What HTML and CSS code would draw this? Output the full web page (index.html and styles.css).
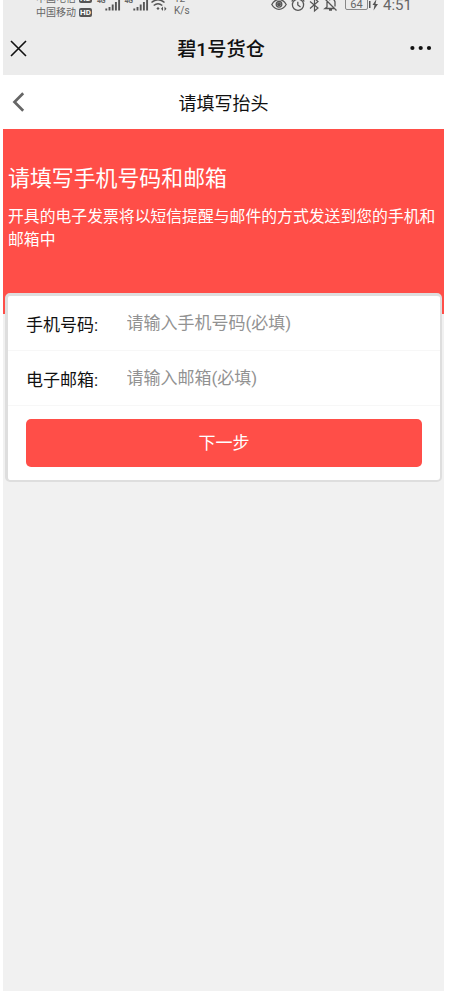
FILE: index.html
```html
<!DOCTYPE html>
<html lang="zh-CN">
<head>
<meta charset="utf-8">
<title>碧1号货仓</title>
<link rel="stylesheet" href="styles.css">
</head>
<body>
<div class="app">
  <header class="top">
    <div class="status">
      <div class="carriers">
        <div class="carrier">中国电信<span class="hd">HD</span></div>
        <div class="carrier">中国移动<span class="hd">HD</span></div>
      </div>
      <div class="signal"><span>4G</span><svg width="16" height="12" viewBox="0 0 16 12"><path d="M1.300 8.500v2M4.500 7v3.500M7.700 4.500v6M10.900 2v8.500M14.100 0v10.500" stroke="#555" stroke-width="1.900"/></svg></div>
      <div class="signal"><span>4G</span><svg width="16" height="12" viewBox="0 0 16 12"><path d="M1.300 8.500v2M4.500 7v3.500M7.700 4.500v6M10.900 2v8.500M14.100 0v10.500" stroke="#555" stroke-width="1.900"/></svg></div>
      <svg class="wifi" width="17" height="13" viewBox="0 0 17 13" fill="none" stroke="#555" stroke-width="1.400"><path d="M.5 2.500Q7 -3 13.500 2.500M2.700 5.500Q7 1.800 11.300 5.500"/><path d="M7 7l1.600 1.500L7 10 5.400 8.500zM12 6.500v4.500l-2-2.200zM13.500 6.500v4.500l2-2.200z" fill="#555" stroke="none"/></svg>
      <div class="speed"><div>12</div><div>K/s</div></div>
      <div class="indicators">
        <svg width="16" height="12" viewBox="0 0 16 12" fill="none" stroke="#555" stroke-width="1.300"><path d="M.8 4.500Q3.500-.5 8-.5T15.200 4.500Q12.500 9.300 8 9.300T.8 4.500z"/><circle cx="8" cy="4.300" r="2.800"/><circle cx="8" cy="4.300" r="1.300" fill="#555"/></svg>
        <svg width="14" height="12" viewBox="0 0 14 12" fill="none" stroke="#555" stroke-width="1.300"><circle cx="7" cy="4.800" r="5.600"/><path d="M6.800 1.800V5l2.700 2M.7 1.500L2.500-.5M13.300 1.500L11.500-.5"/></svg>
        <svg width="11" height="12" viewBox="0 0 11 12" fill="none" stroke="#555" stroke-width="1.200"><path d="M1 1.500l8 6.500-3.500 3V-1.500L9 1.500 1 8.500"/></svg>
        <svg width="15" height="12" viewBox="0 0 15 12" fill="none" stroke="#555" stroke-width="1.300"><path d="M3 1v6L1 8.500h9M5 0Q10-2.500 11 2v4.500M.5-1.500L12.500 10.500M5 10h3"/></svg>
      </div>
      <div class="battery">64</div>
      <svg class="charge" width="10" height="12" viewBox="0 0 10 12"><path d="M0 1h1.500v7H0z" fill="#555"/><path d="M7.500-1L3.500 5h2L4.500 10.500 9 4H6.500z" fill="#555"/></svg>
      <div class="clock">4:51</div>
    </div>
    <div class="nav">
      <svg width="17" height="17" viewBox="0 0 17 17"><path d="M1 1l15 15M16 1L1 16" stroke="#111" stroke-width="1.600"/></svg>
      <h1>碧1号货仓</h1>
      <svg width="22" height="6" viewBox="0 0 22 6" fill="#111"><circle cx="2.400" cy="3" r="2.100"/><circle cx="10.700" cy="3" r="2.100"/><circle cx="19" cy="3" r="2.100"/></svg>
    </div>
  </header>
  <div class="subnav">
    <svg width="13" height="20" viewBox="0 0 13 20"><path d="M11.200 1.300L2.500 10l8.700 8.700" fill="none" stroke="#666" stroke-width="2.700"/></svg>
    <h2>请填写抬头</h2>
  </div>
  <section class="hero">
    <h3>请填写手机号码和邮箱</h3>
    <p>开具的电子发票将以短信提醒与邮件的方式发送到您的手机和邮箱中</p>
  </section>
  <form class="card">
    <label class="field"><span>手机号码:</span><input type="text" placeholder="请输入手机号码(必填)"></label>
    <label class="field"><span>电子邮箱:</span><input type="text" placeholder="请输入邮箱(必填)"></label>
    <button type="button">下一步</button>
  </form>
</div>
</body>
</html>
```
FILE: styles.css
```css
* { box-sizing: border-box; }
body {
  margin: 0;
  background: #fff;
  font-family: Roboto, "Noto Sans CJK SC", sans-serif;
  color: #111;
}
h1, h2, h3, p { margin: 0; font-weight: 400; }
svg { display: block; flex: none; }
.app {
  width: 441px;
  height: 991px;
  margin-left: 3px;
  background: #f1f1f1;
  overflow: hidden;
}
.top { height: 75px; background: #ececec; }
.status {
  display: flex;
  align-items: flex-start;
  height: 22px;
  padding-left: 33px;
  color: #666;
  overflow: hidden;
}
.carriers { width: 61px; margin-top: -8px; font-size: 10px; line-height: 14px; }
.carrier { display: flex; align-items: center; height: 14px; white-space: nowrap; }
.hd {
  width: 13px;
  height: 9px;
  margin: -2px 0 0 3px;
  border-radius: 2px;
  background: #555;
  color: #fff;
  font-size: 8px;
  font-weight: 700;
  line-height: 9px;
  text-align: center;
}
.signal { display: flex; width: 27.500px; }
.signal span { width: 10px; margin-top: -3px; font-size: 7px; font-weight: 700; line-height: 9px; letter-spacing: -.3px; }
.signal svg { margin-left: -2px; }
.wifi { margin-left: -1px; }
.speed { width: 97px; margin: -7px 0 0 6px; font-size: 10px; line-height: 12px; }
.indicators { display: flex; gap: 4px; width: 69px; }
.indicators svg { overflow: visible; }
.battery {
  width: 23px;
  height: 13px;
  margin: -3px 0 0 5px;
  border: 1px solid #888;
  border-radius: 2px;
  font-size: 11px;
  line-height: 13px;
  text-align: center;
}
.charge { margin-left: 1px; }
.clock { margin: -4px 0 0 4px; font-size: 15px; line-height: 18px; }
.nav {
  display: flex;
  align-items: center;
  justify-content: space-between;
  height: 52px;
  padding: 0 12px 0 7px;
}
.nav h1 { padding: 4px 0 0 5px; font-size: 19.200px; font-weight: 500; line-height: 28px; }
.subnav { display: flex; align-items: center; height: 54px; padding-left: 9px; background: #fff; }
.subnav h2 { flex: 1; padding: 3px 22px 0 0; font-size: 18px; line-height: 26px; text-align: center; }
.hero { height: 185px; padding: 34px 5px 0; background: #ff4e48; color: #fff; }
.hero h3 { font-size: 21.900px; line-height: 32px; }
.hero p { margin-top: 10px; font-size: 15.830px; line-height: 23px; }
.card {
  position: relative;
  height: 189px;
  margin: -21px 2px 0;
  border: 2px solid #dedede;
  border-width: 3px 2px 2px 3px;
  border-radius: 5px;
  background: #fff;
}
.field { display: flex; align-items: center; height: 55px; padding-left: 18px; border-bottom: 1px solid #f7f7f7; }
.field span { width: 100.500px; padding-top: 3px; font-size: 17px; line-height: 24px; }
.field input {
  flex: 1;
  min-width: 0;
  padding: 0;
  border: 0;
  outline: 0;
  background: none;
  font: 17px/24px Roboto, "Noto Sans CJK SC", sans-serif;
}
.field input::placeholder { color: #929292; }
.card button {
  display: block;
  width: 396px;
  height: 48px;
  margin: 13px 0 0 18px;
  padding: 0;
  border: 0;
  border-radius: 5px;
  background: #ff4e48;
  color: #fff;
  font: 17px/24px Roboto, "Noto Sans CJK SC", sans-serif;
}
```
